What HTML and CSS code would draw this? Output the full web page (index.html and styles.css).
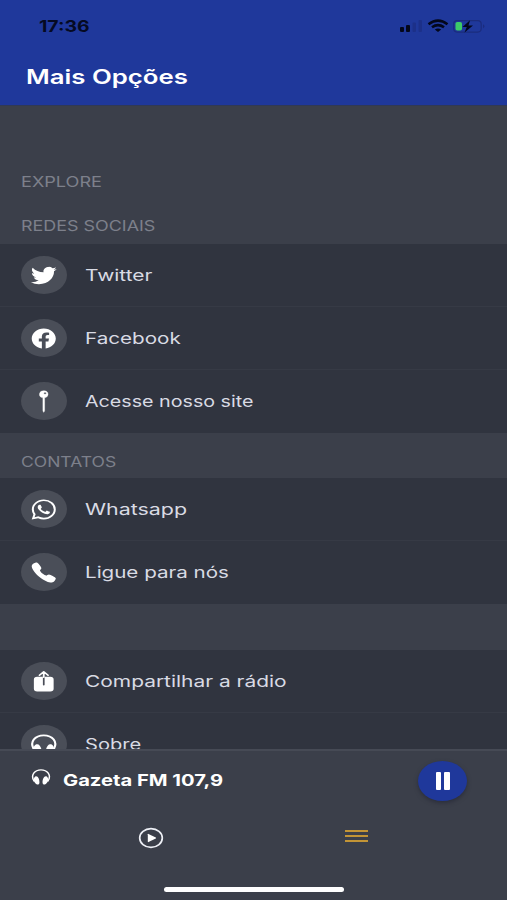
FILE: index.html
```html
<!DOCTYPE html>
<html lang="pt-BR">
<head>
<meta charset="utf-8">
<title>Mais Opções</title>
<link rel="stylesheet" href="styles.css">
</head>
<body>
<div class="app">
  <header class="header">
    <div class="status">
      <span class="time">17:36</span>
      <svg class="signals" viewBox="0 0 88 16">
        <rect x="1" y="9" width="4" height="5" rx="1"/>
        <rect x="7" y="7" width="4" height="7" rx="1"/>
        <g fill="#1c3089"><rect x="13.500" y="4.500" width="3.500" height="9.500" rx="1"/><rect x="19.500" y="2" width="3.500" height="12" rx="1"/></g>
        <g fill="none" stroke="#03071a" stroke-width="2.600"><path d="M29.500 6.200Q39 -.800 48.500 6.200M33 9.300Q39 5 45 9.300"/></g>
        <path d="M35.800 11.500Q39 9.500 42.200 11.500L39 14Z"/>
        <rect x="54.700" y="2.600" width="27.500" height="11.500" rx="3.500" fill="none" stroke="#1b2c7e" stroke-width="1.200"/>
        <path d="M84 6.300q3 2 0 4z" fill="#1b2c7e"/>
        <rect x="56.500" y="4" width="6.500" height="8.600" rx="1.800" fill="#3ccb68"/>
        <path d="M71 2.200L63.500 9h4.300l-2.300 5.500L74 7.500h-4.500z"/>
      </svg>
    </div>
    <h1 class="title">Mais Opções</h1>
  </header>
  <main class="content">
    <h2 class="label first"><span class="w-explore">EXPLORE</span></h2>
    <h2 class="label second"><span class="w-redes">REDES SOCIAIS</span></h2>
    <ul class="list">
      <li class="row">
        <span class="badge"><svg class="icon" viewBox="0 0 512 512" preserveAspectRatio="none"><path d="M496 109.500a201.800 201.800 0 01-56.550 15.300 97.510 97.510 0 0043.330-53.600 197.740 197.740 0 01-62.560 23.500A99.140 99.140 0 00348.310 64c-54.420 0-98.460 43.400-98.460 96.900a93.210 93.210 0 002.540 22.100 280.700 280.700 0 01-203-101.300A95.690 95.690 0 0036 130.400c0 33.600 17.530 63.300 44 80.700A97.500 97.500 0 0135.220 199v1.200c0 47 34 86.100 79 95a100.760 100.760 0 01-25.940 3.400 94.380 94.380 0 01-18.510-1.800c12.510 38.500 48.920 66.500 92.050 67.300A199.590 199.590 0 0139.500 405.600a203 203 0 01-23.500-1.400A278.680 278.680 0 00166.740 448c181.360 0 280.440-147.700 280.440-275.800 0-4.200-.110-8.400-.310-12.500A198.480 198.480 0 00496 109.500z"/></svg></span>
        <span class="name w-twitter">Twitter</span>
      </li>
      <li class="row">
        <span class="badge"><svg class="icon" viewBox="0 0 512 512" preserveAspectRatio="none"><path d="M480 257.350c0-123.700-100.300-224-224-224s-224 100.300-224 224c0 111.800 81.900 204.470 189 221.290V322.120h-56.890v-64.770H221V208c0-56.130 33.450-87.160 84.610-87.160 24.510 0 50.150 4.380 50.150 4.380v55.130H327.500c-27.810 0-36.510 17.260-36.510 35v42h62.120l-9.920 64.770H291v156.540c107.100-16.810 189-109.480 189-221.310z"/></svg></span>
        <span class="name w-facebook">Facebook</span>
      </li>
      <li class="row">
        <span class="badge"><svg class="icon" viewBox="0 0 512 512" preserveAspectRatio="none"><path fill-rule="evenodd" stroke="#fff" stroke-width="8" d="M336 96a80 80 0 10-96 78.390v283.170a32.090 32.090 0 002.490 12.380l10.070 24a3.920 3.920 0 006.880 0l10.070-24a32.090 32.090 0 002.490-12.380V174.390A80.130 80.130 0 00336 96zm-56 0a24 24 0 1124-24 24 24 0 01-24 24z"/></svg></span>
        <span class="name w-site">Acesse nosso site</span>
      </li>
    </ul>
    <h2 class="label"><span class="w-contatos">CONTATOS</span></h2>
    <ul class="list">
      <li class="row">
        <span class="badge"><svg class="icon" viewBox="0 0 512 512" preserveAspectRatio="none"><path fill-rule="evenodd" d="M414.730 97.100A222.140 222.140 0 00256.940 32C134 32 33.920 131.580 33.870 254a220.610 220.610 0 0029.780 111L32 480l118.250-30.870a223.630 223.630 0 00106.600 27h.090c122.930 0 223-99.590 223.060-222A220.180 220.180 0 00414.730 97.100zM256.940 438.660h-.080a185.750 185.750 0 01-94.360-25.720l-6.770-4-70.170 18.320 18.730-68.090-4.410-7A183.460 183.460 0 0171.530 254c0-101.730 83.210-184.500 185.480-184.500a185 185 0 01185.330 184.640c-.040 101.740-83.210 184.520-185.400 184.520zm101.690-138.190c-5.570-2.780-33-16.200-38.080-18.050s-8.830-2.780-12.540 2.780-14.400 18-17.650 21.750-6.500 4.160-12.070 1.380-23.540-8.630-44.830-27.530c-16.570-14.710-27.750-32.870-31-38.420s-.350-8.560 2.440-11.320c2.510-2.490 5.570-6.480 8.360-9.720s3.720-5.560 5.570-9.260.930-6.940-.460-9.710-12.540-30.080-17.180-41.190c-4.530-10.820-9.120-9.350-12.540-9.520-3.250-.160-7-.200-10.690-.200a20.530 20.530 0 00-14.860 6.940c-5.110 5.560-19.510 19-19.510 46.280s20 53.680 22.760 57.380 39.300 59.730 95.210 83.760a323.110 323.110 0 0031.780 11.680c13.350 4.220 25.500 3.630 35.100 2.200 10.710-1.590 33-13.420 37.630-26.380s4.640-24.060 3.250-26.370-5.110-3.710-10.690-6.480z"/></svg></span>
        <span class="name w-whatsapp">Whatsapp</span>
      </li>
      <li class="row">
        <span class="badge"><svg class="icon" viewBox="0 0 512 512" preserveAspectRatio="none"><path d="M391 480c-19.520 0-46.940-7.060-88-30-49.930-28-88.550-53.850-138.210-103.380C116.910 298.770 93.610 267.790 61 208.450c-36.840-67-30.560-102.120-23.540-117.130C45.820 73.380 58.160 62.650 74.110 52a176.300 176.300 0 0128.640-15.200c1-.430 1.930-.840 2.760-1.210 4.950-2.230 12.450-5.600 21.950-2 6.340 2.380 12 7.250 20.860 16 18.170 17.920 43 57.830 52.160 77.430 6.150 13.210 10.220 21.930 10.230 31.710 0 11.450-5.760 20.280-12.750 29.810-1.310 1.790-2.610 3.500-3.870 5.160-7.610 10-9.280 12.890-8.180 18.050 2.230 10.370 18.860 41.240 46.190 68.510s57.310 42.850 67.720 45.070c5.380 1.150 8.330-.590 18.650-8.470 1.480-1.130 3-2.300 4.590-3.470 10.660-7.930 19.080-13.540 30.260-13.540h.060c9.730 0 18.060 4.220 31.860 11.180 18 9.080 59.110 33.590 77.140 51.780 8.770 8.840 13.660 14.480 16.050 20.810 3.600 9.530.210 17-2 22-.370.830-.780 1.740-1.210 2.750a176.490 176.490 0 01-15.290 28.580c-10.630 15.900-21.400 28.210-39.380 36.580A67.420 67.420 0 01391 480z"/></svg></span>
        <span class="name w-ligue">Ligue para nós</span>
      </li>
    </ul>
    <ul class="list spaced">
      <li class="row">
        <span class="badge"><svg class="icon" viewBox="0 0 512 512" preserveAspectRatio="none"><path d="M378 152H272v176a16 16 0 01-32 0V152H134a62 62 0 00-62 62v204a62 62 0 0062 62h244a62 62 0 0062-62V214a62 62 0 00-62-62z"/><path d="M176 116l80-76 80 76M256 48v112" fill="none" stroke="#fff" stroke-width="34" stroke-linecap="round" stroke-linejoin="round"/></svg></span>
        <span class="name w-share">Compartilhar a rádio</span>
      </li>
      <li class="row">
        <span class="badge"><svg class="icon" viewBox="0 0 512 512" preserveAspectRatio="none"><path d="M83 384C-30 190 105 52 256 52s286 138 173 332" fill="none" stroke="#fff" stroke-width="40"/><path d="M108 258c62-35 112 65 108 160-2 35-24 60-58 50C82 438 33 305 108 258zM404 258c-62-35-112 65-108 160 2 35 24 60 58 50 76-30 125-163 50-210z"/></svg></span>
        <span class="name w-sobre">Sobre</span>
      </li>
    </ul>
  </main>
  <footer class="footer">
    <div class="player">
      <svg class="phones" viewBox="0 0 512 512" preserveAspectRatio="none"><path d="M83 384C-30 190 105 52 256 52s286 138 173 332" fill="none" stroke="#fff" stroke-width="38"/><path d="M108 240c62-35 112 65 108 178-2 35-24 60-58 50C82 438 33 300 108 240zM404 240c-62-35-112 65-108 178 2 35 24 60 58 50 76-30 125-168 50-228z"/></svg>
      <span class="station">Gazeta FM 107,9</span>
      <span class="pause"><i></i><i></i></span>
    </div>
    <nav class="tabs">
      <svg class="play" viewBox="0 0 26 22"><ellipse cx="13" cy="11" rx="11.300" ry="9.300" fill="none" stroke="#eef0f6" stroke-width="1.700"/><path d="M9.800 7.200Q9.800 6.600 10.500 6.900L17.800 10.500Q18.500 11 17.800 11.500L10.500 15.100Q9.800 15.400 9.800 14.800Z"/></svg>
      <span class="menu"><i></i><i></i><i></i></span>
    </nav>
    <div class="home"></div>
  </footer>
</div>
</body>
</html>
```
FILE: styles.css
```css
* { box-sizing: border-box; }
body { margin: 0; background: #3b3f4a; font-family: Inter, "Open Sans", sans-serif; color: #d9dbe4; }
ul, h1, h2 { margin: 0; padding: 0; }
svg { fill: #fff; display: block; flex: none; }
.app { height: 900px; display: flex; flex-direction: column; overflow: hidden; }
.header { height: 106px; flex: none; background: #1f389b; border-bottom: 1px solid #303956; }
.status { height: 52px; display: flex; justify-content: space-between; align-items: center; padding: 0 20px 0 39px; }
.time { font-size: 16px; font-weight: 700; color: #050a22; transform-origin: left; transform: scaleX(1.21); }
.signals { width: 88px; height: 16px; fill: #03071a; }
.title { width: max-content; height: 50px; margin-left: 26px; line-height: 51px; font-size: 20px; font-weight: 600; color: #fff; white-space: nowrap; transform-origin: left; transform: scaleX(1.288); }
.content { flex: 1; min-height: 0; overflow: hidden; }
.label { height: 45px; padding: 12px 21px 0; display: flex; align-items: center; font-size: 14px; font-weight: 400; line-height: 20px; color: #7d808b; white-space: nowrap; }
.label span { transform-origin: left; }
.label.first { margin-top: 47px; }
.label.second { height: 46px; padding-top: 10px; }
.list { list-style: none; background: #30343f; }
.spaced { margin-top: 46px; }
.row { height: 63px; display: flex; align-items: center; padding-left: 21px; border-bottom: 1px solid #363a45; }
.row:last-child { border-bottom-color: transparent; }
.badge { width: 46px; height: 38px; flex: none; border-radius: 50%; background: #4a4e58; display: flex; align-items: center; justify-content: center; }
.icon { width: 27.5px; height: 23px; }
.name { margin-left: 18px; font-size: 16px; white-space: nowrap; transform-origin: left; }
.w-explore { transform: scaleX(1.295); }
.w-redes { transform: scaleX(1.28); }
.w-contatos { transform: scaleX(1.25); }
.w-twitter { transform: scaleX(1.307); }
.w-facebook { transform: scaleX(1.29); }
.w-site { transform: scaleX(1.23); }
.w-whatsapp { transform: scaleX(1.337); }
.w-ligue { transform: scaleX(1.285); }
.w-share { transform: scaleX(1.307); }
.w-sobre { transform: scaleX(1.255); }
.footer { height: 151px; flex: none; background: #3b3f4a; border-top: 2px solid #464a55; display: flex; flex-direction: column; }
.player { height: 60px; display: flex; align-items: center; padding: 0 40px 0 31px; color: #fff; }
.phones { width: 20px; height: 18px; margin-top: -8px; }
.station { margin: -2px 0 0 12px; font-size: 16px; font-weight: 700; transform-origin: left; transform: scaleX(1.26); white-space: nowrap; }
.pause { margin-left: auto; width: 49px; height: 40px; border-radius: 50%; background: #1f389b; box-shadow: 0 2px 4px #2b2e3b; display: flex; justify-content: center; align-items: center; gap: 3px; }
.pause i { width: 5.5px; height: 18px; background: #fff; border-radius: 1px; }
.tabs { height: 54px; display: flex; align-items: center; justify-content: space-between; padding: 0 139px 0 138px; }
.play { width: 26px; height: 22px; }
.menu { display: flex; flex-direction: column; gap: 3px; width: 23px; margin-top: -4px; }
.menu i { height: 2px; background: #c29436; }
.home { width: 180px; height: 5px; border-radius: 3px; background: #fff; margin: 22px auto 0 164px; }
```
